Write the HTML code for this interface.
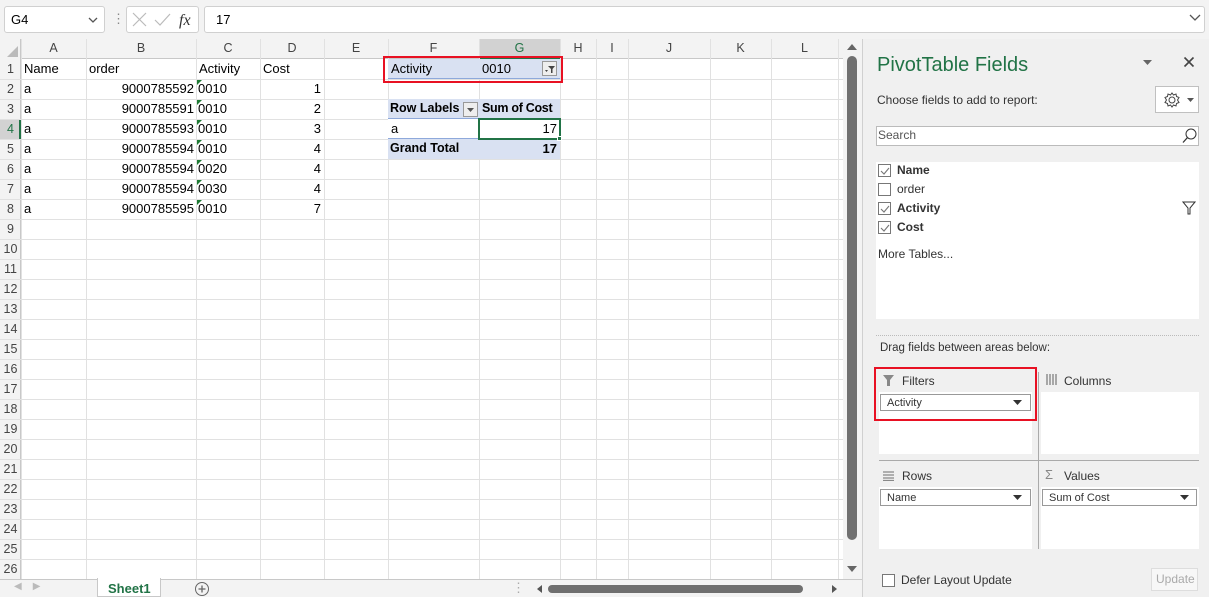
<!DOCTYPE html>
<html><head><meta charset="utf-8"><style>
*{box-sizing:border-box;margin:0;padding:0}
body{width:1209px;height:597px;overflow:hidden;background:#fff;font-family:"Liberation Sans",Calibri,sans-serif;font-size:13px;color:#000;position:relative}
.a{position:absolute}
.t{position:absolute;white-space:nowrap}
.hl{position:absolute;left:0;width:843px;height:1px;background:#e1e1e1}
.vl{position:absolute;top:39px;height:540px;width:1px;background:#e1e1e1}
.ch{position:absolute;top:41px;text-align:center;color:#444;font-size:12.5px}
.rh{position:absolute;left:0;width:21px;text-align:center;color:#444;font-size:12.5px}
.cell{position:absolute;font-size:13px}
.tri{position:absolute;width:0;height:0;border-top:5px solid #1e7b34;border-right:5px solid transparent}
.pb{position:absolute;background:#fff}
</style></head><body>
<div class="a" style="left:0;top:0;width:1209px;height:39px;background:#f3f3f3"></div>
<div class="a" style="left:4px;top:6px;width:101px;height:27px;background:#fff;border:1px solid #d0d0d0;border-radius:3px"></div>
<div class="t" style="left:11px;top:12px;font-size:13px">G4</div>
<svg class="a" style="left:88px;top:16px" width="10" height="8"><path d="M1 2 L5 6 L9 2" stroke="#555" fill="none" stroke-width="1.3"/></svg>
<div class="t" style="left:112px;top:11px;color:#888">⋮</div>
<div class="a" style="left:126px;top:6px;width:73px;height:27px;background:#fff;border:1px solid #d0d0d0;border-radius:3px"></div>
<svg class="a" style="left:130px;top:10px" width="66" height="20"><path d="M3 3 L16 16 M16 3 L3 16" stroke="#bbb" stroke-width="1.2"/><path d="M25 10 L30 15 L40 4" stroke="#bbb" fill="none" stroke-width="1.2"/><text x="49" y="15" font-family="Liberation Serif" font-style="italic" font-size="16" fill="#333">fx</text></svg>
<div class="a" style="left:204px;top:6px;width:1001px;height:27px;background:#fff;border:1px solid #d0d0d0;border-radius:3px"></div>
<div class="t" style="left:216px;top:12px;font-size:13px">17</div>
<svg class="a" style="left:1189px;top:14px" width="12" height="8"><path d="M1 1 L6 6 L11 1" stroke="#555" fill="none" stroke-width="1.3"/></svg>

<div class="a" style="left:0;top:39px;width:843px;height:20px;background:#f3f3f3;border-bottom:1px solid #c8c8c8"></div>
<div class="a" style="left:0;top:39px;width:21px;height:540px;background:#f3f3f3;border-right:1px solid #c8c8c8"></div>
<div class="a" style="left:479px;top:39px;width:81px;height:20px;background:#d2d2d2;border-bottom:2px solid #217346"></div>
<div class="a" style="left:0;top:119px;width:21px;height:20px;background:#d2d2d2;border-right:2px solid #217346"></div>
<svg class="a" style="left:6px;top:45px" width="13" height="13"><path d="M12 1 L12 12 L1 12 Z" fill="#bbb"/></svg>

<div id="g"></div>
<script>
var cols=[21,86,196,260,324,388,479,560,596,628,710,771,838];
var names="ABCDEFGHIJKL";
var h="";
for(var i=0;i<cols.length;i++){h+='<div class="vl" style="left:'+cols[i]+'px"></div>';}
for(var i=0;i<12;i++){var c=names[i]=="G"?"color:#217346;":"";h+='<div class="ch" style="left:'+cols[i]+'px;width:'+(cols[i+1]-cols[i])+'px;'+c+'">'+names[i]+'</div>';}
for(var r=1;r<=26;r++){var y=59+(r-1)*20;h+='<div class="hl" style="top:'+(y+20)+'px"></div>';h+='<div class="rh" style="top:'+(y+3)+'px;'+(r==4?'color:#217346':'')+'">'+r+'</div>';}
document.getElementById('g').innerHTML=h;
</script>

<div class="a" style="left:388px;top:59px;width:172px;height:20px;background:#d9e1f2;border-bottom:1px solid #8ea9db"></div>
<div class="a" style="left:388px;top:99px;width:172px;height:20px;background:#d9e1f2;border-bottom:1px solid #8ea9db"></div>
<div class="a" style="left:388px;top:119px;width:172px;height:20px;background:#fff;border-bottom:1px solid #8ea9db"></div>
<div class="a" style="left:388px;top:139px;width:172px;height:20px;background:#d9e1f2"></div>
<div class="a" style="left:478px;top:118px;width:83px;height:22px;border:2px solid #217346"></div>
<div class="a" style="left:557px;top:136px;width:5px;height:5px;background:#217346;border:1px solid #fff"></div>
<div class="a" style="left:383px;top:56px;width:180px;height:27px;border:2px solid #e81123"></div>
<div class="a" style="left:542px;top:61px;width:15px;height:15px;background:#eee;border:1px solid #999"></div>
<svg class="a" style="left:544px;top:63px" width="12" height="12"><path d="M4 3 L11 3 L8.5 6 L8.5 10 L7 10 L7 6 Z" fill="#444"/><path d="M1 7 L4 7 L2.5 9 Z" fill="#444"/></svg>

<div class="cell" style="left:24px;top:61px">Name</div>
<div class="cell" style="left:89px;top:61px">order</div>
<div class="cell" style="left:199px;top:61px">Activity</div>
<div class="cell" style="left:263px;top:61px">Cost</div>
<div id="d"></div>
<script>
var o=["9000785592","9000785591","9000785593","9000785594","9000785594","9000785594","9000785595"];
var a=["0010","0010","0010","0010","0020","0030","0010"];var c=[1,2,3,4,4,4,7];var s="";
for(var i=0;i<7;i++){var y=79+i*20;
s+='<div class="cell" style="left:24px;top:'+(y+2)+'px">a</div>';
s+='<div class="cell" style="left:86px;width:108px;text-align:right;top:'+(y+2)+'px">'+o[i]+'</div>';
s+='<div class="cell" style="left:198px;top:'+(y+2)+'px">'+a[i]+'</div>';
s+='<div class="tri" style="left:197px;top:'+(y+1)+'px"></div>';
s+='<div class="cell" style="left:260px;width:61px;text-align:right;top:'+(y+2)+'px">'+c[i]+'</div>';}
document.getElementById('d').innerHTML=s;
</script>
<div class="cell" style="left:391px;top:61px">Activity</div>
<div class="cell" style="left:482px;top:61px">0010</div>
<div class="cell" style="left:390px;top:101px;font-weight:bold;font-size:12.5px">Row Labels</div>
<div class="cell" style="left:482px;top:101px;font-weight:bold;font-size:12.5px;letter-spacing:-0.3px">Sum of Cost</div>
<div class="a" style="left:463px;top:102px;width:15px;height:15px;background:#eee;border:1px solid #999"></div>
<svg class="a" style="left:465px;top:107px" width="11" height="6"><path d="M2 1 L9 1 L5.5 5 Z" fill="#555"/></svg>
<div class="cell" style="left:391px;top:121px">a</div>
<div class="cell" style="left:479px;width:78px;text-align:right;top:121px">17</div>
<div class="cell" style="left:390px;top:141px;font-weight:bold;font-size:12.5px">Grand Total</div>
<div class="cell" style="left:479px;width:78px;text-align:right;top:141px;font-weight:bold">17</div>

<div class="a" style="left:843px;top:39px;width:19px;height:540px;background:#f3f3f3"></div>
<svg class="a" style="left:846px;top:43px" width="12" height="8"><path d="M1 7 L6 1 L11 7 Z" fill="#666"/></svg>
<div class="a" style="left:847px;top:56px;width:10px;height:484px;background:#707070;border-radius:5px"></div>
<svg class="a" style="left:846px;top:565px" width="12" height="8"><path d="M1 1 L6 7 L11 1 Z" fill="#666"/></svg>

<div class="a" style="left:0;top:579px;width:862px;height:18px;background:#f3f3f3;border-top:1px solid #c8c8c8"></div>
<div class="t" style="left:14px;top:581px;color:#bbb;font-size:10px">◀&nbsp;&nbsp;&nbsp;&nbsp;▶</div>
<div class="a" style="left:97px;top:578px;width:64px;height:19px;background:#fff;border:1px solid #c8c8c8;border-top:none"></div>
<div class="t" style="left:108px;top:581px;color:#217346;font-weight:bold;font-size:13px">Sheet1</div>
<svg class="a" style="left:194px;top:581px" width="16" height="16"><circle cx="8" cy="8" r="6.5" stroke="#666" fill="none"/><path d="M8 4.5 V11.5 M4.5 8 H11.5" stroke="#666" stroke-width="1.3"/></svg>
<div class="t" style="left:512px;top:580px;color:#aaa">⋮</div>
<svg class="a" style="left:535px;top:584px" width="8" height="10"><path d="M7 1 L2 5 L7 9 Z" fill="#555"/></svg>
<div class="a" style="left:548px;top:585px;width:255px;height:8px;background:#6f6f6f;border-radius:4px"></div>
<svg class="a" style="left:831px;top:584px" width="8" height="10"><path d="M1 1 L6 5 L1 9 Z" fill="#555"/></svg>

<div class="a" style="left:862px;top:39px;width:347px;height:558px;background:#f0f0f0;border-left:1px solid #d0d0d0"></div>
<div class="t" style="left:877px;top:54px;font-size:20px;color:#217346">PivotTable Fields</div>
<svg class="a" style="left:1142px;top:59px" width="11" height="7"><path d="M1 1 L10 1 L5.5 6 Z" fill="#666"/></svg>
<svg class="a" style="left:1183px;top:56px" width="12" height="12"><path d="M1.5 1.5 L10.5 10.5 M10.5 1.5 L1.5 10.5" stroke="#444" stroke-width="1.6"/></svg>
<div class="t" style="left:877px;top:93px;font-size:12px;color:#333">Choose fields to add to report:</div>
<div class="a" style="left:1155px;top:86px;width:44px;height:27px;background:#fff;border:1px solid #c0c0c0"></div>
<svg class="a" style="left:1162px;top:90px" width="20" height="20"><circle cx="10" cy="10" r="3" stroke="#444" fill="none"/><path d="M10 3 L11.5 5 L14 4 L14.5 6.5 L17 7.5 L15.5 10 L17 12.5 L14.5 13.5 L14 16 L11.5 15 L10 17 L8.5 15 L6 16 L5.5 13.5 L3 12.5 L4.5 10 L3 7.5 L5.5 6.5 L6 4 L8.5 5 Z" stroke="#444" fill="none"/></svg>
<svg class="a" style="left:1186px;top:97px" width="9" height="6"><path d="M1 1 L8 1 L4.5 5 Z" fill="#555"/></svg>
<div class="a" style="left:876px;top:126px;width:323px;height:20px;background:#fff;border:1px solid #bbb"></div>
<div class="t" style="left:878px;top:128px;font-size:12px;color:#555">Search</div>
<svg class="a" style="left:1181px;top:127px" width="18" height="18"><circle cx="10" cy="7" r="5" stroke="#333" fill="none"/><path d="M6.5 10.5 L2 15.5" stroke="#333" stroke-width="1.3"/></svg>
<div class="a" style="left:876px;top:162px;width:323px;height:157px;background:#fff"></div>
<div id="f"></div>
<script>
var f=[["Name",1,1],["order",0,0],["Activity",1,1],["Cost",1,1]];var s="";
for(var i=0;i<4;i++){var y=163+i*19;
s+='<div class="a" style="left:878px;top:'+(y+1)+'px;width:13px;height:13px;border:1px solid #777;background:#fff"></div>';
if(f[i][1])s+='<svg class="a" style="left:880px;top:'+(y+3)+'px" width="10" height="10"><path d="M1 5 L4 8 L9 2" stroke="#777" fill="none" stroke-width="1.1"/></svg>';
s+='<div class="t" style="left:897px;top:'+y+'px;font-size:12px;color:#333;'+(f[i][2]?'font-weight:bold':'')+'">'+f[i][0]+'</div>';}
document.getElementById('f').innerHTML=s;
</script>
<svg class="a" style="left:1182px;top:201px" width="14" height="14"><path d="M1 1 L13 1 L8 7 L8 13 L6 13 L6 7 Z" stroke="#333" fill="none"/></svg>
<div class="t" style="left:878px;top:247px;font-size:12px;color:#333">More Tables...</div>
<div class="a" style="left:876px;top:335px;width:323px;border-top:1px dotted #bbb"></div>
<div class="t" style="left:880px;top:342px;font-size:11.5px;color:#333">Drag fields between areas below:</div>

<svg class="a" style="left:883px;top:375px" width="12" height="12"><path d="M0 0 L11 0 L7 5 L7 11 L4 11 L4 5 Z" fill="#888"/></svg>
<div class="t" style="left:902px;top:374px;font-size:12px;color:#333">Filters</div>
<svg class="a" style="left:1046px;top:374px" width="12" height="12"><path d="M1 0 V11 M4 0 V11 M7 0 V11 M10 0 V11" stroke="#888" stroke-width="1.4"/></svg>
<div class="t" style="left:1064px;top:374px;font-size:12px;color:#333">Columns</div>
<div class="pb" style="left:879px;top:392px;width:153px;height:62px"></div>
<div class="pb" style="left:1041px;top:392px;width:158px;height:62px"></div>
<div class="a" style="left:879px;top:460px;width:320px;height:1px;background:#aaa"></div>
<div class="a" style="left:1038px;top:372px;width:1px;height:177px;background:#aaa"></div>
<svg class="a" style="left:883px;top:471px" width="12" height="10"><path d="M0 1 H11 M0 4 H11 M0 7 H11 M0 9.5 H11" stroke="#888" stroke-width="1.2"/></svg>
<div class="t" style="left:902px;top:469px;font-size:12px;color:#333">Rows</div>
<div class="t" style="left:1045px;top:467px;font-size:13px;color:#888">Σ</div>
<div class="t" style="left:1064px;top:469px;font-size:12px;color:#333">Values</div>
<div class="pb" style="left:879px;top:487px;width:153px;height:62px"></div>
<div class="pb" style="left:1041px;top:487px;width:158px;height:62px"></div>

<div class="a" style="left:880px;top:394px;width:151px;height:17px;background:#fff;border:1px solid #999"></div>
<div class="t" style="left:887px;top:397px;font-size:11px;color:#333">Activity</div>
<svg class="a" style="left:1013px;top:400px" width="9" height="5"><path d="M0 0 L9 0 L4.5 5 Z" fill="#333"/></svg>
<div class="a" style="left:880px;top:489px;width:151px;height:17px;background:#fff;border:1px solid #999"></div>
<div class="t" style="left:887px;top:492px;font-size:11px;color:#333">Name</div>
<svg class="a" style="left:1013px;top:495px" width="9" height="5"><path d="M0 0 L9 0 L4.5 5 Z" fill="#333"/></svg>
<div class="a" style="left:1042px;top:489px;width:155px;height:17px;background:#fff;border:1px solid #999"></div>
<div class="t" style="left:1049px;top:492px;font-size:11px;color:#333">Sum of Cost</div>
<svg class="a" style="left:1180px;top:495px" width="9" height="5"><path d="M0 0 L9 0 L4.5 5 Z" fill="#333"/></svg>
<div class="a" style="left:874px;top:367px;width:163px;height:54px;border:2px solid #e81123"></div>

<div class="a" style="left:882px;top:574px;width:13px;height:13px;border:1px solid #777;background:#fff"></div>
<div class="t" style="left:901px;top:573px;font-size:12px;color:#333">Defer Layout Update</div>
<div class="a" style="left:1151px;top:568px;width:47px;height:23px;background:#f7f7f7;border:1px solid #ddd"></div>
<div class="t" style="left:1156px;top:572px;font-size:12px;color:#aaa">Update</div>
</body></html>
